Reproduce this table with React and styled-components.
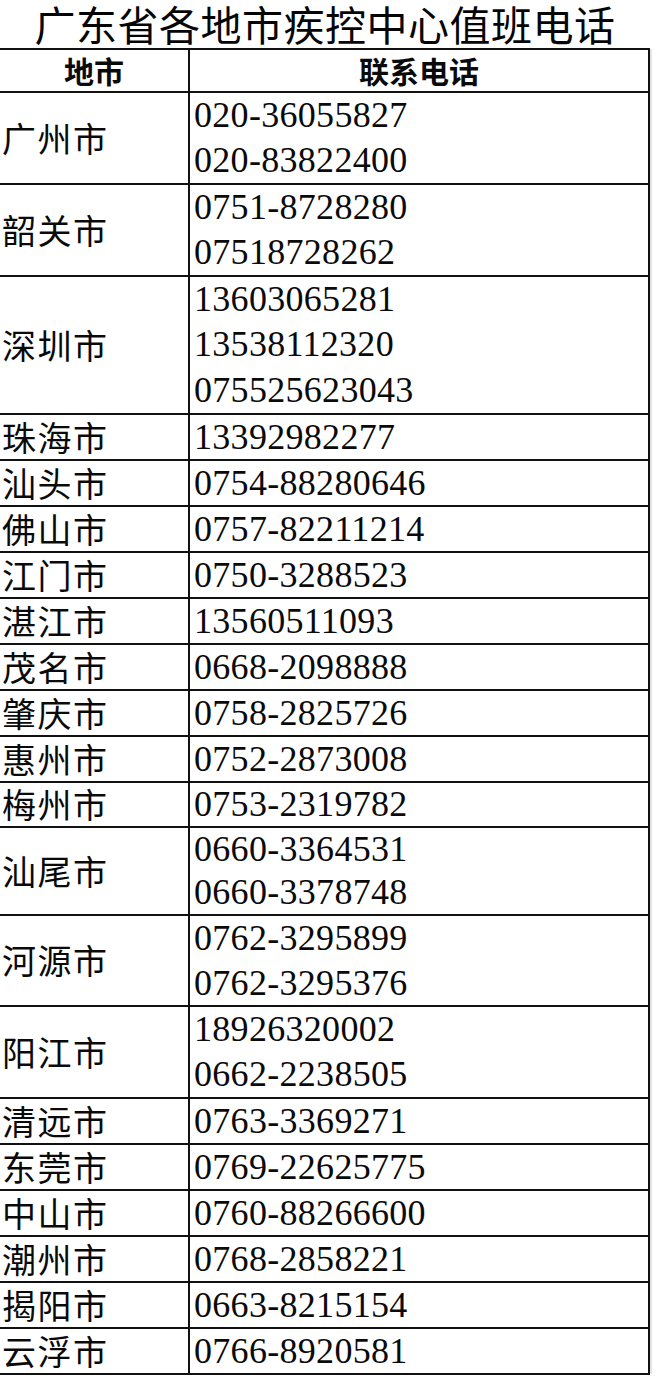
import React from "react";
import styled, { createGlobalStyle } from "styled-components";

const GlobalStyle = createGlobalStyle`
  html, body {
    margin: 0;
    padding: 0;
    background: #ffffff;
  }
  body {
    width: 656px;
    font-family: "Noto Sans CJK SC", sans-serif;
    color: #0a0a0a;
  }
`;

const rows = [
  { city: "广州市", phones: ["020-36055827", "020-83822400"], h: 92 },
  { city: "韶关市", phones: ["0751-8728280", "07518728262"], h: 92 },
  {
    city: "深圳市",
    phones: ["13603065281", "13538112320", "075525623043"],
    h: 138,
  },
  { city: "珠海市", phones: ["13392982277"], h: 46 },
  { city: "汕头市", phones: ["0754-88280646"], h: 46 },
  { city: "佛山市", phones: ["0757-82211214"], h: 46 },
  { city: "江门市", phones: ["0750-3288523"], h: 46 },
  { city: "湛江市", phones: ["13560511093"], h: 46 },
  { city: "茂名市", phones: ["0668-2098888"], h: 46 },
  { city: "肇庆市", phones: ["0758-2825726"], h: 46 },
  { city: "惠州市", phones: ["0752-2873008"], h: 46 },
  { city: "梅州市", phones: ["0753-2319782"], h: 45 },
  { city: "汕尾市", phones: ["0660-3364531", "0660-3378748"], h: 88 },
  { city: "河源市", phones: ["0762-3295899", "0762-3295376"], h: 91 },
  { city: "阳江市", phones: ["18926320002", "0662-2238505"], h: 92 },
  { city: "清远市", phones: ["0763-3369271"], h: 46 },
  { city: "东莞市", phones: ["0769-22625775"], h: 46 },
  { city: "中山市", phones: ["0760-88266600"], h: 46 },
  { city: "潮州市", phones: ["0768-2858221"], h: 46 },
  { city: "揭阳市", phones: ["0663-8215154"], h: 46 },
  { city: "云浮市", phones: ["0766-8920581"], h: 46 },
];

const Page = styled.div`
  width: 656px;
  height: 1381px;
  overflow: hidden;
  background: #fff;
`;

const Title = styled.h1`
  margin: 0;
  width: 650px;
  height: 48px;
  display: flex;
  align-items: center;
  justify-content: center;
  font-family: "Noto Sans CJK SC", sans-serif;
  font-weight: 400;
  font-size: 41px;
  line-height: 1.1;
  letter-spacing: 0.5px;
  color: #050505;
  white-space: nowrap;
`;

const Sheet = styled.div`
  width: 650px;
  box-sizing: border-box;
  border-top: 2px solid #111;
  border-right: 2px solid #111;
  box-shadow: 3px 0 0 -1px #e4e4e4;
`;

const Row = styled.div`
  display: grid;
  grid-template-columns: 190px 1fr;
  height: ${({ h }) => h}px;
  box-sizing: border-box;
  border-bottom: 2px solid #111;
`;

const HeadRow = styled(Row)`
  height: 43px;
`;

const HeadCell = styled.div`
  display: flex;
  align-items: center;
  justify-content: center;
  font-family: "Noto Sans CJK SC", sans-serif;
  font-weight: 700;
  font-size: 30px;
  line-height: 1.15;
  border-right: ${({ last }) => (last ? "none" : "2px solid #111")};
`;

const CityCell = styled.div`
  display: flex;
  align-items: center;
  padding-left: 2px;
  border-right: 2px solid #111;
  font-family: "Noto Sans CJK SC", sans-serif;
  font-size: 34px;
  line-height: 1.2;
  letter-spacing: 1.5px;
  white-space: nowrap;
`;

const PhoneCell = styled.div`
  display: flex;
  flex-direction: column;
  justify-content: center;
  padding-left: 4px;
`;

const Phone = styled.div`
  font-family: "Liberation Serif", "Times New Roman", serif;
  font-size: 36px;
  line-height: ${({ lh }) => lh}px;
  height: ${({ lh }) => lh}px;
  letter-spacing: 0.3px;
  white-space: nowrap;
  color: #0a0a0a;
`;

const App = () => {
  return (
    <Page>
      <GlobalStyle />
      <Title>广东省各地市疾控中心值班电话</Title>
      <Sheet>
        <HeadRow>
          <HeadCell>地市</HeadCell>
          <HeadCell last>联系电话</HeadCell>
        </HeadRow>
        {rows.map((r) => (
          <Row key={r.city} h={r.h}>
            <CityCell>{r.city}</CityCell>
            <PhoneCell>
              {r.phones.map((p) => (
                <Phone key={p} lh={(r.h - 2) / r.phones.length}>
                  {p}
                </Phone>
              ))}
            </PhoneCell>
          </Row>
        ))}
      </Sheet>
    </Page>
  );
};

export default App;
